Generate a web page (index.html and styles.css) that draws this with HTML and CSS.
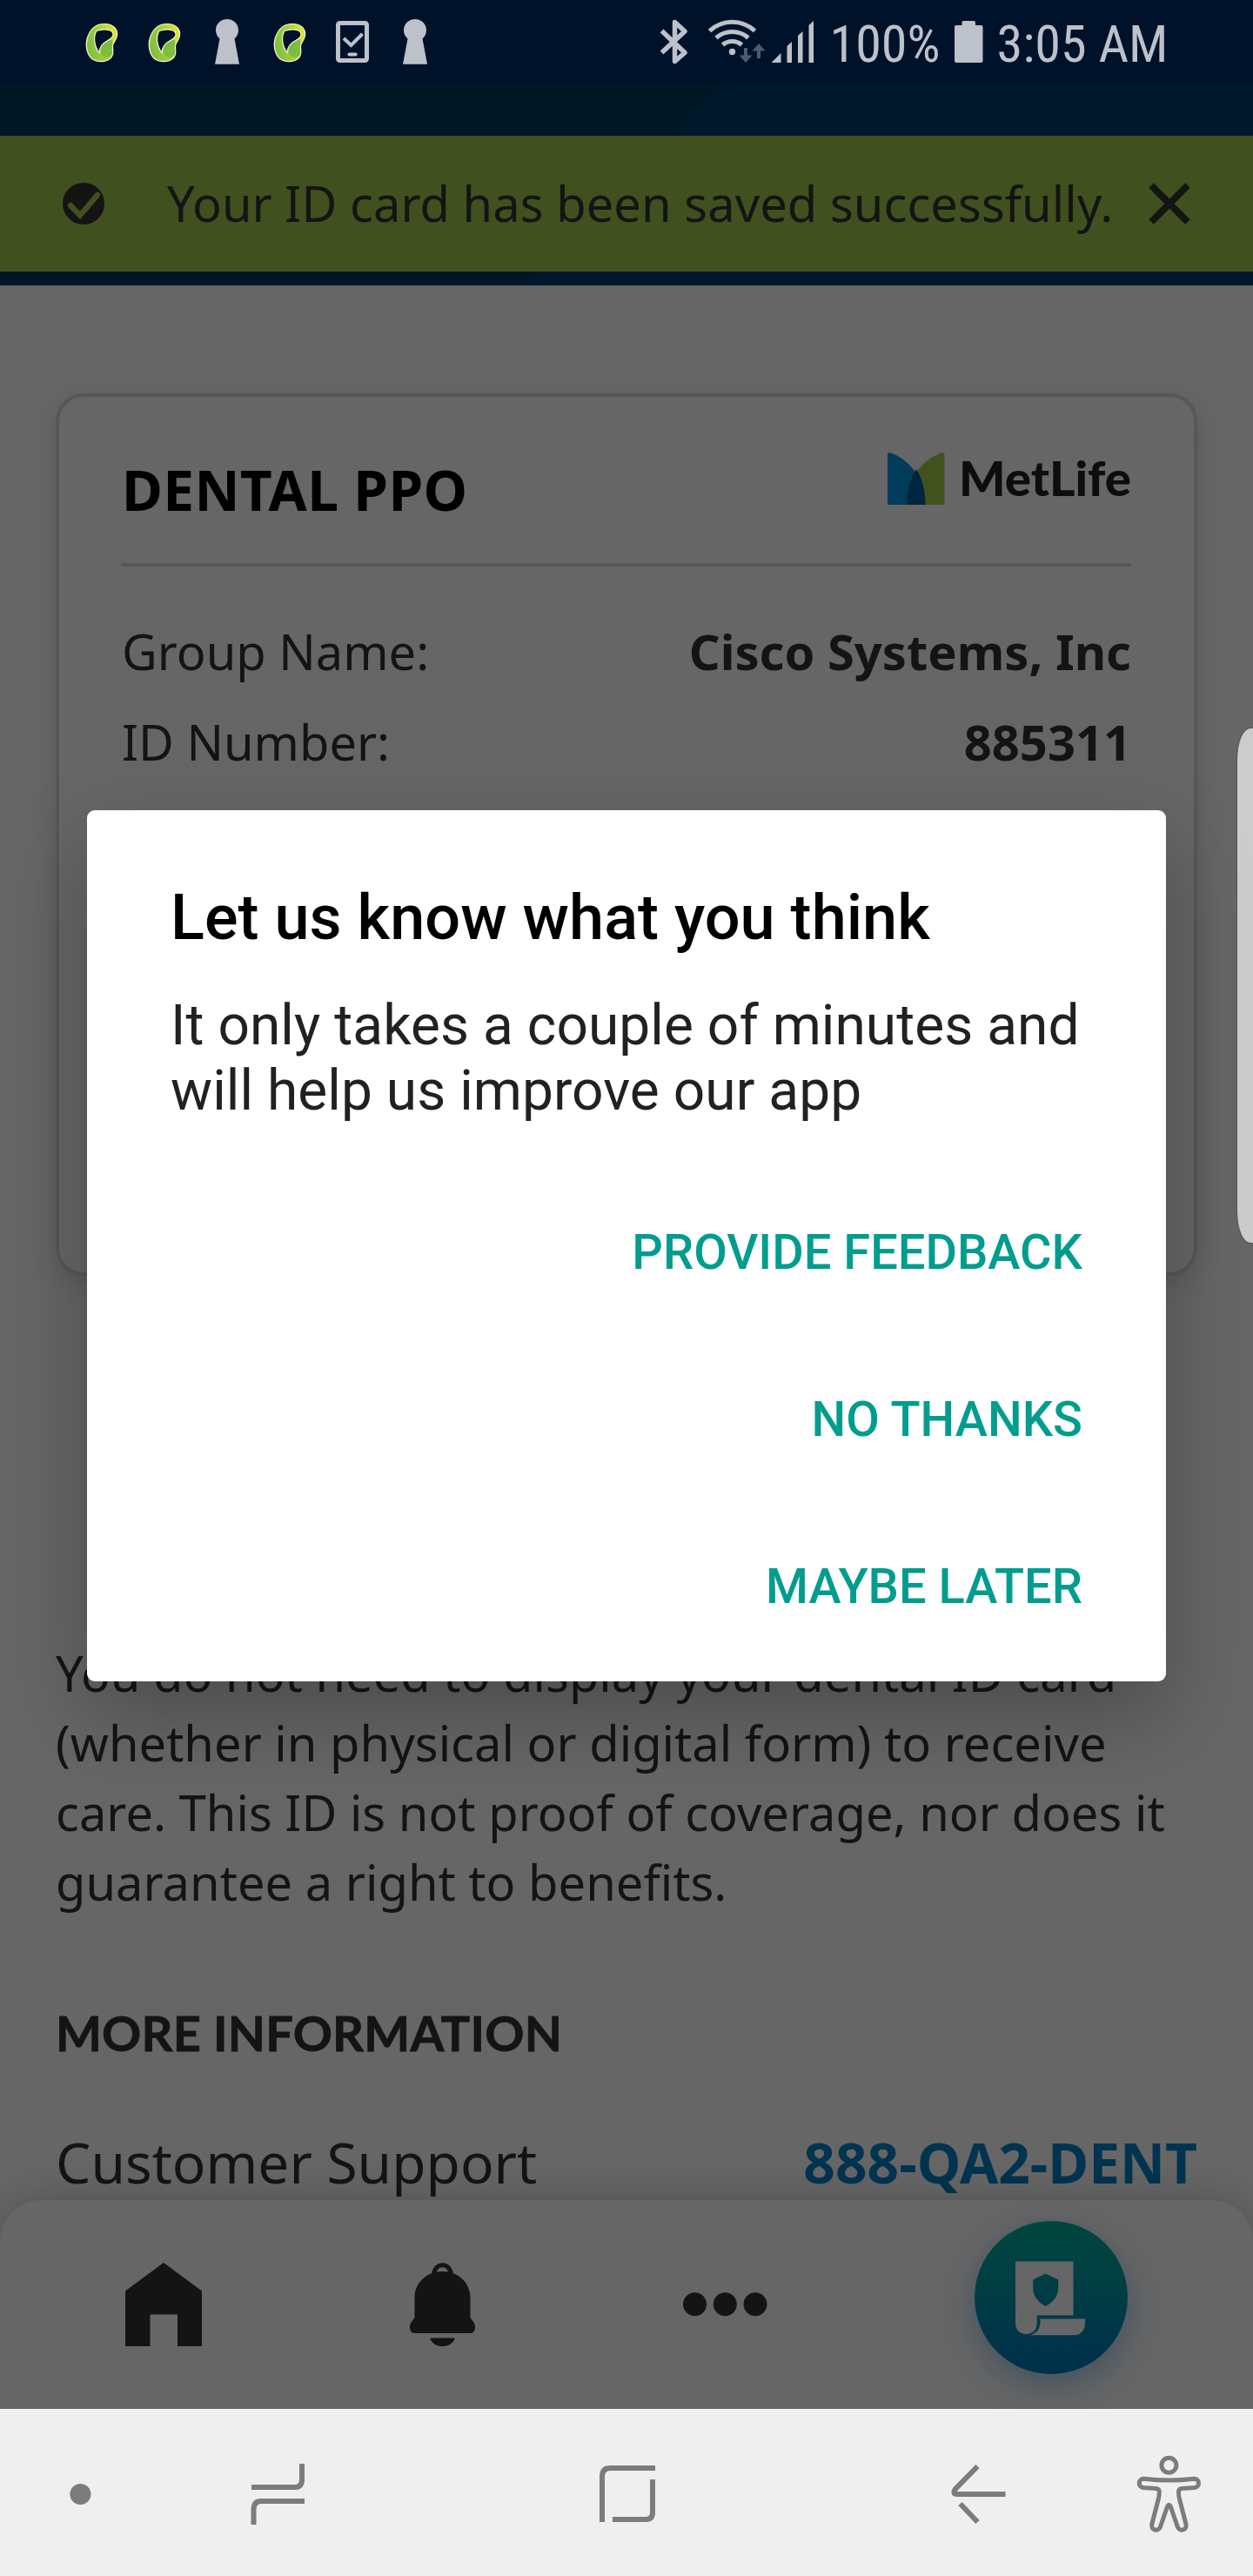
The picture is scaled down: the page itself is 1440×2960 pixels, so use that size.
FILE: index.html
```html
<!DOCTYPE html>
<html lang="en">
<head>
<meta charset="utf-8">
<title>Dental ID card</title>
<link rel="stylesheet" href="styles.css">
</head>
<body>
<div class="phone">
  <header class="status">
    <svg class="defs" width="0" height="0" aria-hidden="true">
      <defs>
        <linearGradient id="leaf" x1="0" y1="0.600" x2="1" y2="0.300">
          <stop offset="0" stop-color="#7dbe42"/><stop offset=".5" stop-color="#a3cf3a"/><stop offset="1" stop-color="#dbe52c"/>
        </linearGradient>
        <symbol id="ribbon" viewBox="0 0 72 96">
          <path d="M39 27.500C50 27.500 54.500 34 53.500 41 52.500 47 49 48 48.500 53 48.500 59 50 61 47.500 65 44 71 33 72 27 69 19 65 17 53 19 45 22 34 28 27.500 39 27.500z" fill="url(#leaf)" stroke="#f4f8d8" stroke-width="1.200"/>
          <path d="M30 35.500C36 33.500 43 33.500 47 35.500 51.500 40 48 44 42 47 36 50 33.500 54 33 60.500 27 53 26 42 30 35.500z" fill="#00122a" stroke="#f4f8d8" stroke-width="1.200"/>
          <path d="M36 53C39 49 44 47 47.500 45.500 49 49 47 53 48 59c1 4-3 7-6 7-6 0-9-6-6-13z" fill="#7dbb42"/>
        </symbol>
        <symbol id="keyhole" viewBox="0 0 72 96">
          <path d="M36 22c7.500 0 13 5.600 13 12.500 0 4-1.600 7.500-4.500 10L50 73.700H22l5.500-29.200c-2.900-2.500-4.500-6-4.500-10C23 27.600 28.500 22 36 22z" fill="#bcc1ca"/>
        </symbol>
      </defs>
    </svg>
    <div class="status-left">
      <svg width="72" height="96"><use href="#ribbon"/></svg>
      <svg width="72" height="96"><use href="#ribbon"/></svg>
      <svg width="72" height="96"><use href="#keyhole"/></svg>
      <svg width="72" height="96"><use href="#ribbon"/></svg>
      <svg width="72" height="96" viewBox="369 0 72 96" fill="none" stroke="#bcc1ca">
        <rect x="388.500" y="26.500" width="33" height="43" rx="2" stroke-width="5"/>
        <path d="M395 44l8.500 8 13-13" stroke-width="4"/>
        <path d="M401.500 62.500h7" stroke-width="4.200" stroke-linecap="round"/>
      </svg>
      <svg width="72" height="96"><use href="#keyhole"/></svg>
    </div>
    <div class="status-right">
      <svg width="52" height="96" viewBox="750 0 52 96" fill="none" stroke="#bcc1ca" stroke-width="5.500">
        <path d="M760.500 35.500L787 60.500 775.500 70.500V25.500L787 36 760.500 60.500" stroke-linejoin="round"/>
      </svg>
      <svg width="80" height="96" viewBox="802 0 80 96" fill="none" stroke="#bcc1ca" stroke-width="5">
        <path d="M815.500 35.500a38 38 0 0 1 52 0M823 43.500a28 28 0 0 1 37 0M830.500 51.500a17 17 0 0 1 22 0"/>
        <circle cx="841.500" cy="59.500" r="3.700" fill="#bcc1ca" stroke="none"/>
        <path d="M857 55v12M872 67V54" stroke="#4d5a6c" stroke-width="4"/>
        <path d="M849.500 63.500h15l-7.500 8.500zM864.500 58.500h15l-7.500-8.500z" fill="#4d5a6c" stroke="none"/>
      </svg>
      <svg width="68" height="96" viewBox="882 0 68 96" fill="#bcc1ca">
        <path d="M886.500 72l11-11v11zM904.500 72V53l5.500-5v24zM917 72V41l5.500-5v36zM929.500 72V29l5.500-5v48z"/>
      </svg>
      <svg class="status-text" width="140" height="96" viewBox="950 0 140 96">
        <text x="953.500" y="71" textLength="127" lengthAdjust="spacingAndGlyphs">100%</text>
      </svg>
      <svg width="50" height="96" viewBox="1090 0 50 96" fill="#bcc1ca">
        <path d="M1099 29h6.500v-3q0-2 2-2h11.500q2 0 2 2v3h6.500q2 0 2 2v39q0 2-2 2h-28.500q-2 0-2-2v-39q0-2 2-2z"/>
      </svg>
      <svg class="status-text" width="205" height="96" viewBox="1140 0 205 96">
        <text x="1145.500" y="71" textLength="197" lengthAdjust="spacingAndGlyphs">3:05 AM</text>
      </svg>
    </div>
  </header>

  <div class="app">
    <div class="banner">
      <div class="toast">
        <svg width="48" height="48" viewBox="72 210 48 48">
          <circle cx="96" cy="234" r="24" fill="#141414"/>
          <path d="M81 236l11 11.500 20-23.500" fill="none" stroke="#41501f" stroke-width="6.500" stroke-linecap="round"/>
        </svg>
        <span class="toast-text">Your ID card has been saved successfully.</span>
        <svg width="48" height="48" viewBox="0 0 48 48"><path d="M3 3l42 42M45 3L3 45" stroke="#141414" stroke-width="8"/></svg>
      </div>
    </div>

    <main class="content">
      <section class="card">
        <div class="card-head">
          <h2>DENTAL PPO</h2>
          <svg class="logo" width="280" height="76" viewBox="1020 520 280 76">
            <path d="M1020 523.500q0-4.500 4-3C1050 530 1063.500 556 1063.500 580H1022q-2 0-2-2z" fill="#003b59"/>
            <path d="M1085.500 523.500q0-4.500-4-3C1055 530 1042 556 1042 580h41.500q2 0 2-2z" fill="#41521e"/>
            <path d="M1053 539c7 11 10.500 26 10.500 41H1042c0-15 4-30 11-41z" fill="#00253f"/>
            <text x="1102" y="570" textLength="198" lengthAdjust="spacingAndGlyphs">MetLife</text>
          </svg>
        </div>
        <dl class="facts">
          <div><dt>Group Name:</dt><dd>Cisco Systems, Inc</dd></div>
          <div><dt>ID Number:</dt><dd>885311</dd></div>
        </dl>
      </section>

      <p class="note">You do not need to display your dental ID card<br>(whether in physical or digital form) to receive<br>care. This ID is not proof of coverage, nor does it<br>guarantee a right to benefits.</p>
      <h3>MORE INFORMATION</h3>
      <div class="support"><span>Customer Support</span><b>888-QA2-DENT</b></div>
    </main>

    <nav class="tabs">
      <svg width="376" height="240" viewBox="0 2528 376 240"><path d="M188 2600l44 32.500V2696h-28v-36.500h-31.500V2696H144v-63.500z" fill="#141414"/></svg>
      <svg width="264" height="240" viewBox="376 2528 264 240" fill="#141414">
        <path d="M498.500 2615c0-16.500 20-16.500 20 0" fill="none" stroke="#141414" stroke-width="5"/>
        <path d="M508.500 2610c18 0 32 13 32 30v23c2 3.500 5.500 6 5.500 11 0 4-2 7-5 7h-65c-3 0-5-3-5-7 0-5 3.500-7.500 5.500-11v-23c0-17 14-30 32-30z"/>
        <path d="M496 2686.500h25q2.500 0 1 2.500c-3 4.500-7 7-13.500 7s-10.500-2.500-13.500-7q-1.500-2.500 1-2.500z"/>
      </svg>
      <svg width="386" height="240" viewBox="640 2528 386 240" fill="#141414"><circle cx="798.500" cy="2647.700" r="13.500"/><circle cx="833.300" cy="2647.700" r="13.500"/><circle cx="868" cy="2647.700" r="13.500"/></svg>
      <div class="fab-slot">
        <div class="fab">
          <svg width="80" height="86" viewBox="1167 2597.500 80 86">
            <path fill-rule="evenodd" fill="#666" d="M1167 2598h66.500v62h-41.700v9c0 7-5 12.500-12.500 12.500s-12.300-5.500-12.300-12.500zM1201.700 2612l-14.500 7v10c0 9 6 16 14.500 20.500 8.500-4.500 14.500-11.500 14.500-20.500v-10z"/>
            <path fill="#666" d="M1195.500 2664H1247v5c0 8-5 13.700-12 13.700h-51c7-2 11-7 11.500-14z"/>
          </svg>
        </div>
      </div>
    </nav>

    <div class="edge"></div>

    <div class="dialog" role="dialog">
      <h1>Let us know what you think</h1>
      <p>It only takes a couple of minutes and<br>will help us improve our app</p>
      <div class="actions">
        <button>PROVIDE FEEDBACK</button>
        <button>NO THANKS</button>
        <button>MAYBE LATER</button>
      </div>
    </div>
  </div>

  <footer class="sysnav">
    <svg width="186" height="192" viewBox="0 2768 186 192"><circle cx="92.400" cy="2866" r="12" fill="#7c7c7c" stroke="none"/></svg>
    <svg width="268" height="192" viewBox="186 2768 268 192"><path d="M347 2831v18q0 9-8 9h-50M350 2874h-50q-8.500 0-8.500 10v17"/></svg>
    <svg width="534" height="192" viewBox="454 2768 534 192"><path d="M692 2898v-52q0-10 9-10h52M750 2849v38q0 8-8 8h-38"/></svg>
    <svg width="272" height="192" viewBox="988 2768 272 192"><path d="M1123.500 2834L1098 2860q-4 6 2 6H1155.500M1103.500 2877l20 21"/></svg>
    <svg width="167" height="192" viewBox="1260 2768 167 192" class="thin" stroke-linejoin="round">
      <circle cx="1343.400" cy="2832.700" r="8.500"/>
      <path d="M1314.500 2848.200c19 2.400 39 2.400 57.800 0 6.500 0 7.300 9.300.5 10.300l-15 1q-3.300.5-3.300 4 0 5 1 8l7.500 29c1.500 7-7 9-9.500 3.500l-8.300-24q-1.800-3.500-3.600 0l-8.300 24c-2.500 5.500-11 3.500-9.500-3.500l7.500-29q1-3 1-8 0-3.500-3.300-4l-15-1c-6.800-1-6-10.300.5-10.300z"/>
    </svg>
  </footer>
</div>
</body>
</html>
```
FILE: styles.css
```css
* { box-sizing: border-box; margin: 0; padding: 0; }
body { background: #666; font-family: "Noto Sans", sans-serif; color: #141414; }
svg { display: block; flex: none; }
.phone { width: 1440px; height: 2960px; display: flex; flex-direction: column; overflow: hidden; }

.status { height: 96px; background: #00122a; display: flex; justify-content: space-between; padding: 0 95px 0 81px; }
.defs { position: absolute; }
.status-left, .status-right { display: flex; }
.status-text text { font: 60px "Roboto Condensed", Roboto, sans-serif; fill: #bcc1ca; }

.app { height: 2672px; position: relative; overflow: hidden; background: #666; }
.banner { height: 232px; padding: 60px 0 16px; background: linear-gradient(135deg, #001826 590px, #00182c 591px); }
.toast { height: 156px; padding: 0 72px; background: #41501f; display: flex; align-items: center; }
.toast-text { flex: 1; padding-left: 72px; font-size: 56px; line-height: 154px; height: 156px; letter-spacing: .06px; white-space: nowrap; }

.content { padding: 124px 64px 0; }
.card { height: 1014px; border: 4px solid #575755; border-radius: 32px; padding: 0 72px; box-shadow: 0 8px 28px rgba(0, 0, 0, .13); }
.card-head { height: 195px; padding-top: 63px; border-bottom: 4px solid #575755; display: flex; justify-content: space-between; }
.card-head h2 { font-size: 64px; line-height: 88px; font-weight: 700; letter-spacing: .35px; color: #000; }
.logo { margin-top: 1px; overflow: visible; }
.logo text { font: 900 56px Lato, sans-serif; fill: #0e0c0d; }
.facts { padding-top: 45px; font-size: 56px; line-height: 104px; }
.facts div { display: flex; justify-content: space-between; }
.facts dd { font-weight: 700; }
.note { margin-top: 416px; font-size: 56px; line-height: 80px; letter-spacing: .03px; white-space: nowrap; }
.content h3 { margin-top: 94px; font: 700 56px/80px Lato, sans-serif; letter-spacing: .2px; -webkit-text-stroke: .8px #141414; }
.support { margin-top: 65px; display: flex; justify-content: space-between; font-size: 64px; line-height: 88px; }
.support b { color: #003450; }

.tabs { position: absolute; left: 0; right: 0; bottom: 0; height: 240px; display: flex; background: #666; border-radius: 48px 48px 0 0; box-shadow: 0 0 48px rgba(0, 0, 0, .2); }
.fab-slot { width: 364px; padding-top: 24px; display: flex; justify-content: center; }
.fab { width: 176px; height: 176px; border-radius: 50%; background: linear-gradient(#00473d, #00304c); box-shadow: 0 12px 40px rgba(0, 48, 84, .36); padding: 45.500px 0 0 47px; }

.edge { position: absolute; right: 0; top: 741px; width: 18px; height: 591px; background: #ccc; border-radius: 15px 0 0 15px / 36px 0 0 36px; box-shadow: 0 0 2px rgba(0, 0, 0, .5); }

.dialog { position: absolute; left: 100px; top: 835px; width: 1240px; height: 1001px; padding: 82px 96px 0; background: #fff; border-radius: 9px; box-shadow: 0 40px 96px rgba(0, 0, 0, .25); font-family: Roboto, sans-serif; }
.dialog h1 { font-size: 72px; line-height: 84px; font-weight: 500; letter-spacing: .04px; color: #000; white-space: nowrap; }
.dialog p { margin-top: 44px; font-size: 64px; line-height: 75px; letter-spacing: .06px; color: #212121; white-space: nowrap; }
.actions { margin-top: 52px; display: flex; flex-direction: column; align-items: flex-end; }
.actions button { height: 192px; border: 0; background: none; font: 500 56px/192px Roboto, sans-serif; color: #009d8e; }

.sysnav { height: 192px; background: #efefef; display: flex; }
.sysnav svg { fill: none; stroke: #7c7c7c; stroke-width: 6; }
.sysnav .thin { stroke-width: 5; }
```
